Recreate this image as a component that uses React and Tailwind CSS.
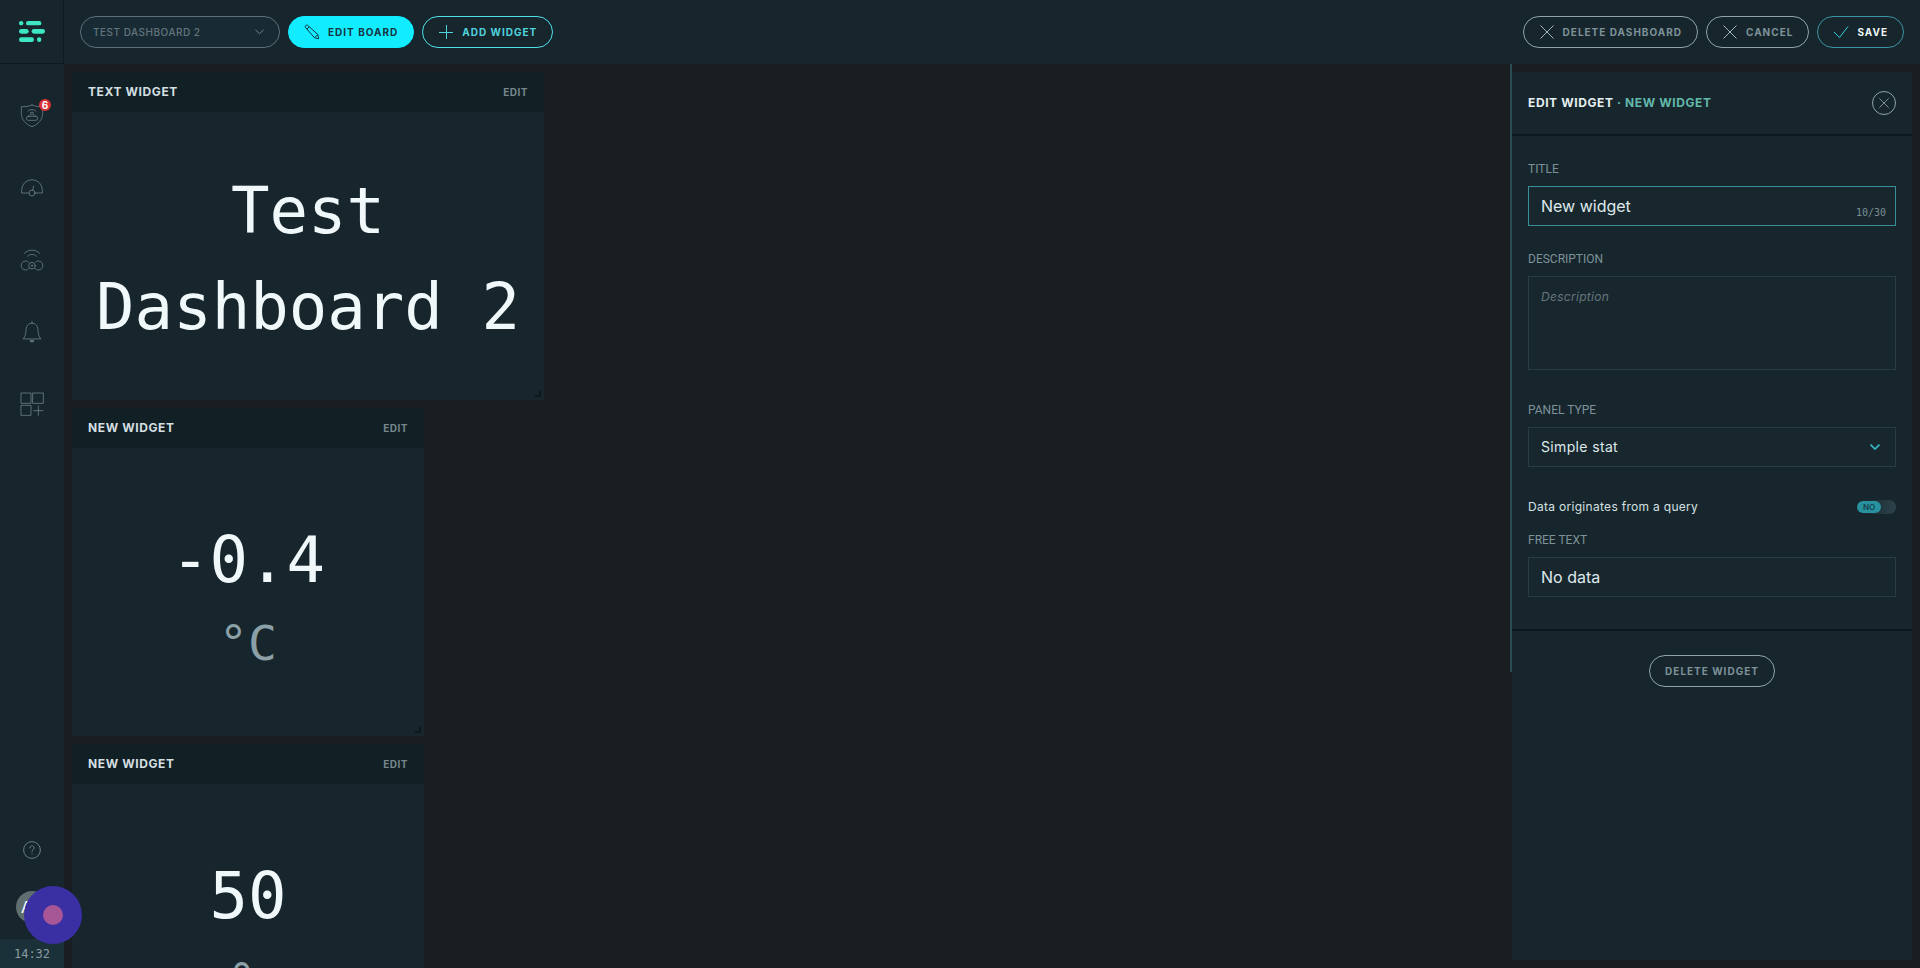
import { useState } from 'react'
import clsx from 'clsx'

const MAX_TITLE = 30

const widgets = [
  { id: 1, title: 'Text widget', lines: ['Test', 'Dashboard 2'], wide: true },
  { id: 2, title: 'New widget', lines: ['-0.4'], unit: '°C' },
  { id: 3, title: 'New widget', lines: ['50'], unit: '%' },
]

function Logo() {
  return (
    <svg className="w-[26px] h-[21px]" viewBox="0 0 78 63" fill="#3ee6c4">
      <rect x="0" y="0" width="13" height="13" rx="6.5" />
      <rect x="21" y="0" width="46" height="13" rx="6.5" />
      <rect x="0" y="24" width="29" height="14" rx="7" />
      <rect x="38" y="24" width="40" height="14" rx="7" />
      <rect x="0" y="49" width="45" height="14" rx="7" />
      <rect x="54" y="49" width="13" height="14" rx="6.5" />
    </svg>
  )
}

function NavIcon({ children }) {
  return (
    <svg className="w-6 h-6" viewBox="0 0 72 72" fill="none" stroke="currentColor" strokeWidth="2.5" strokeLinecap="round" strokeLinejoin="round">
      {children}
    </svg>
  )
}

function ShieldIcon() {
  return (
    <NavIcon>
      <path d="M36 3C26 8 15 8 4 8v20c0 18 13 33 32 40 19-7 32-22 32-40V8C57 8 46 8 36 3z" />
      <rect x="19" y="37" width="34" height="12" rx="6" />
      <path d="M26 37c0-9 20-9 20 0M24 21c6-6 18-6 24 0" />
      <path d="M31 26c3-2 7-2 10 0" />
    </NavIcon>
  )
}

function GaugeIcon() {
  return (
    <NavIcon>
      <path d="M26 51H5v-9a31 31 0 0 1 62 0v9H46" />
      <circle cx="36" cy="51" r="9" />
      <path d="M38 42l3-12" />
    </NavIcon>
  )
}

function CameraIcon() {
  return (
    <NavIcon>
      <path d="M13 16c12-13 34-13 46 0M22 25c8-8 20-8 28 0" />
      <path d="M25 42c-2-2-5-3-8-3a13 13 0 0 0 0 27c4 0 7-1 9-4M47 42c2-2 5-3 8-3a13 13 0 0 1 0 27c-4 0-7-1-9-4" />
      <circle cx="36" cy="53" r="10" />
      <circle cx="36" cy="53" r="2" />
    </NavIcon>
  )
}

function BellIcon() {
  return (
    <NavIcon>
      <path d="M36 4v6M10 56c7-6 7-16 8-26 1-14 8-20 18-20s17 6 18 20c1 10 1 20 8 26z" />
      <path d="M30 62c1 5 11 5 12 0z" fill="currentColor" />
    </NavIcon>
  )
}

function WidgetsIcon() {
  return (
    <NavIcon>
      <path d="M4 3h29v31H4zM39 3h31v31H39zM4 40h29v30H4zM55 42v28M41 56h28" strokeLinejoin="miter" />
    </NavIcon>
  )
}

function Cross({ className }) {
  return (
    <svg className={className} viewBox="0 0 14 14" fill="none" stroke="currentColor">
      <path d="M.5.5l13 13M13.5.5l-13 13" />
    </svg>
  )
}

function Chevron({ className, strokeWidth = 1 }) {
  return (
    <svg className={className} viewBox="0 0 10 6" fill="none" stroke="currentColor" strokeWidth={strokeWidth}>
      <path d="M.5.7L5 5 9.500.7" />
    </svg>
  )
}

function PillButton({ icon, className, children }) {
  return (
    <button
      type="button"
      className={clsx('h-8 flex items-center gap-2 rounded-full border px-[15px] text-[10px] font-bold uppercase tracking-widest whitespace-nowrap', className)}
    >
      {icon}
      {children}
    </button>
  )
}

function Sidebar() {
  const items = [
    { label: 'Security', icon: <ShieldIcon />, badge: 6 },
    { label: 'Overview', icon: <GaugeIcon /> },
    { label: 'Devices', icon: <CameraIcon /> },
    { label: 'Alerts', icon: <BellIcon /> },
    { label: 'Dashboards', icon: <WidgetsIcon /> },
  ]

  return (
    <aside className="w-16 shrink-0 flex flex-col bg-[#17262d] text-[#6b7d84]">
      <a href="#" aria-label="Home" className="h-16 flex items-center justify-center border-r border-b border-[#0e1a1f]">
        <Logo />
      </a>
      <nav className="pt-4">
        {items.map(item => (
          <a key={item.label} href="#" aria-label={item.label} className="h-18 flex items-center justify-center">
            <span className="relative">
              {item.icon}
              {item.badge && (
                <span className="absolute -top-[5px] left-[19px] w-3 h-3 rounded-full bg-[#d93036] text-white text-[10px] leading-3 font-bold text-center">
                  {item.badge}
                </span>
              )}
            </span>
          </a>
        ))}
      </nav>

      <div className="mt-auto flex flex-col items-center">
        <button type="button" aria-label="Help" className="mb-8">
          <svg className="w-[18px] h-[18px]" viewBox="0 0 18 18" fill="none" stroke="currentColor" strokeLinecap="round">
            <circle cx="9" cy="9" r="8.400" />
            <path d="M6.800 7c0-3 4.400-2.800 4.400-.2C11.200 8.500 9 8.600 9 10.500M9 12.800v.2" />
          </svg>
        </button>
        <button type="button" aria-label="Account" className="w-8 h-8 mb-4 pl-[5px] rounded-full bg-[#5f6f70] text-white text-base text-left">
          A
        </button>
        <div className="w-full h-[29px] flex items-center justify-center bg-[#1b3139] font-['DejaVu_Sans_Mono',monospace] text-xs text-[#8a9ca2]">
          14:32
        </div>
      </div>
    </aside>
  )
}

function Header() {
  return (
    <header className="h-16 shrink-0 flex items-center gap-2 px-4 bg-[#17262d]">
      <div className="relative w-[200px] h-8">
        <select
          aria-label="Dashboard"
          className="w-full h-full appearance-none rounded-full border border-[#5d7078] bg-[#182b34] pl-3 pr-8 text-[10px] font-medium tracking-wider text-[#63757c]"
        >
          <option>TEST DASHBOARD 2</option>
        </select>
        <Chevron className="absolute right-4 top-[13px] w-[9px] h-[6px] text-[#7d9097] pointer-events-none" />
      </div>
      <PillButton
        className="bg-[#12ecff] border-[#12ecff] text-[#17343f]"
        icon={
          <svg className="w-4 h-4" viewBox="0 0 16 16" fill="none" stroke="currentColor" strokeLinejoin="round">
            <path d="M1.300 3.200c-.6-1.200.9-2.700 2.200-2l10.300 9.300.9 4.200-4.200-.9zM2.800 5.200l2.400-2.400M10.500 13.800l3.300-3.300" />
          </svg>
        }
      >
        Edit board
      </PillButton>
      <PillButton
        className="border-[#4fdfe6] text-[#4fd3dd]"
        icon={
          <svg className="w-4 h-4" viewBox="0 0 16 16" fill="none" stroke="currentColor">
            <path d="M8.500 1v14M1 8.500h14" />
          </svg>
        }
      >
        Add widget
      </PillButton>

      <div className="ml-auto flex gap-2">
        <PillButton className="border-[#8fa5aa] text-[#7d9298]" icon={<Cross className="w-[14px] h-[14px] mx-px text-[#a5b6ba]" />}>
          Delete dashboard
        </PillButton>
        <PillButton className="border-[#8fa5aa] text-[#7d9298]" icon={<Cross className="w-[14px] h-[14px] mx-px text-[#a5b6ba]" />}>
          Cancel
        </PillButton>
        <PillButton
          className="border-[#3b93a3] text-[#eef6f7]"
          icon={
            <svg className="w-4 h-4 text-[#35cfdc]" viewBox="0 0 16 16" fill="none" stroke="currentColor">
              <path d="M1 8l5.500 5.500L15 2.500" />
            </svg>
          }
        >
          Save
        </PillButton>
      </div>
    </header>
  )
}

function Widget({ widget }) {
  return (
    <section className={clsx('relative h-[328px] shrink-0 flex flex-col bg-[#17262d]', widget.wide ? 'w-[472px]' : 'w-[352px]')}>
      <div className="h-10 shrink-0 flex items-center justify-between px-4 bg-[#112025] uppercase font-bold">
        <h2 className="text-xs tracking-wider text-[#d5dfe1]">{widget.title}</h2>
        <button type="button" className="text-[10px] tracking-wider uppercase text-[#75868b]">Edit</button>
      </div>
      <div className="flex-1 flex flex-col items-center justify-center pt-[5px] font-['DejaVu_Sans_Mono',monospace]">
        {widget.lines.map(line => (
          <p key={line} className="text-[64px] leading-[96px] text-[#f0f8fa]">{line}</p>
        ))}
        {widget.unit && <p className="text-5xl leading-[70px] text-[#8ba0a7]">{widget.unit}</p>}
      </div>
      {/* resize handle */}
      <span className="absolute right-[3px] bottom-[3px] w-[6px] h-[6px] border-r-2 border-b-2 border-[#0d181c] cursor-se-resize" />
    </section>
  )
}

function EditPanel() {
  const [title, setTitle] = useState('New widget')
  const [description, setDescription] = useState('')
  const [fromQuery, setFromQuery] = useState(false)
  const [freeText, setFreeText] = useState('No data')

  const label = 'block h-[18px] mb-2 font-[Roboto,sans-serif] text-xs leading-[18px] uppercase text-[#7d9298]'
  const field = 'block w-full border bg-[#18272e] px-3 focus:outline-none'

  return (
    <div className="relative w-[410px] shrink-0 pl-[2px] pr-2 py-2">
      <span className="absolute left-0 top-0 w-[2px] h-[608px] bg-[#2a4c57]" />
      <form className="h-full bg-[#17262d]">
        <div className="h-16 flex items-center justify-between px-4 border-b-2 border-[#0b181d]">
          <h2 className="text-xs font-bold uppercase tracking-wider text-[#e6eff0]">
            Edit widget <span className="text-[#62b8aa]">· New widget</span>
          </h2>
          <button type="button" aria-label="Close" className="w-6 h-6 flex items-center justify-center rounded-full border border-[#8fa5aa] text-[#a5b6ba]">
            <Cross className="w-[10px] h-[10px]" />
          </button>
        </div>

        <div className="px-4 pt-6 pb-8 border-b-2 border-[#0b181d]">
          <label htmlFor="title" className={label}>Title</label>
          <div className="relative mb-6">
            <input
              id="title"
              value={title}
              maxLength={MAX_TITLE}
              onChange={e => setTitle(e.target.value)}
              className={clsx(field, 'h-10 border-[#3a8f96] text-base text-[#dfe9eb]')}
            />
            <span className="absolute right-[10px] bottom-[6px] font-['DejaVu_Sans_Mono',monospace] text-[10px] text-[#7a8d93]">
              {title.length}/{MAX_TITLE}
            </span>
          </div>

          <label htmlFor="description" className={label}>Description</label>
          <textarea
            id="description"
            placeholder="Description"
            value={description}
            onChange={e => setDescription(e.target.value)}
            className={clsx(field, 'h-[94px] mb-[31px] py-3 border-[#2a3b42] text-xs tracking-wide resize-none text-[#dfe9eb] placeholder:italic placeholder:text-[#65767c]')}
          />

          <label htmlFor="panel-type" className={label}>Panel type</label>
          <div className="relative mb-8">
            <select id="panel-type" className={clsx(field, 'h-10 appearance-none border-[#2a3b42] text-sm tracking-wide text-[#dfe9eb]')}>
              <option>Simple stat</option>
            </select>
            <Chevron strokeWidth={1.6} className="absolute right-4 top-[17px] w-[10px] h-[6px] text-[#35bfcb] pointer-events-none" />
          </div>

          <label className="h-4 mb-4 flex items-center justify-between text-xs tracking-wide text-[#d5e0e2]">
            Data originates from a query
            <input
              type="checkbox"
              checked={fromQuery}
              onChange={e => setFromQuery(e.target.checked)}
              className="sr-only"
            />
            <span className={clsx('w-10 h-[14px] flex items-center rounded-full px-px bg-linear-to-r from-[#14222a] to-[#2d434b]', fromQuery && 'justify-end')}>
              <span className="w-6 h-3 rounded-full bg-[#2791a0] text-[8px] leading-3 font-medium text-center text-[#123642] tracking-normal">
                {fromQuery ? 'YES' : 'NO'}
              </span>
            </span>
          </label>

          <label htmlFor="free-text" className={label}>Free text</label>
          <input
            id="free-text"
            value={freeText}
            onChange={e => setFreeText(e.target.value)}
            className={clsx(field, 'h-10 border-[#2a3b42] text-base text-[#dfe9eb]')}
          />
        </div>

        <div className="flex justify-center pt-6">
          <PillButton className="border-[#8fa5aa] text-[#7d9298]">Delete widget</PillButton>
        </div>
      </form>
    </div>
  )
}

export default function App() {
  return (
    <div className="h-screen flex overflow-hidden bg-[#191e21] font-[Inter,sans-serif]">
      <Sidebar />
      <div className="flex-1 min-w-0 flex flex-col">
        <Header />
        <div className="flex-1 min-h-0 flex">
          <main className="flex-1 min-w-0 flex flex-col gap-2 p-2 overflow-hidden">
            {widgets.map(w => <Widget key={w.id} widget={w} />)}
          </main>
          <EditPanel />
        </div>
      </div>

      {/* floating record button */}
      <button type="button" aria-label="Record" className="fixed left-6 bottom-6 w-[58px] h-[58px] flex items-center justify-center rounded-full bg-[#3a30a4]">
        <span className="w-5 h-5 rounded-full bg-[#a85796]" />
      </button>
    </div>
  )
}
